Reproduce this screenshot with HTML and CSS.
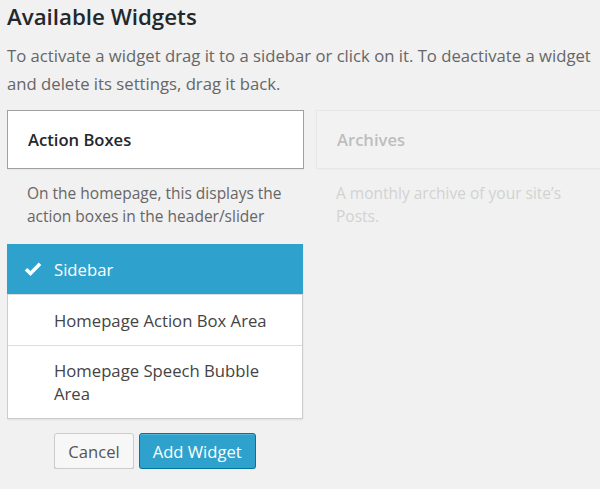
FILE: index.html
```html
<!DOCTYPE html>
<html>
<head>
<meta charset="utf-8">
<link rel="stylesheet" href="styles.css">
</head>
<body>
<div class="page">
  <h2 class="title">Available Widgets</h2>
  <p class="intro">To activate a widget drag it to a sidebar or click on it. To deactivate a widget and delete its settings, drag it back.</p>
  <div class="widgets">
    <div class="widget active">
      <div class="widget-top"><span class="widget-name">Action Boxes</span></div>
      <div class="widget-desc">On the homepage, this displays the action boxes in the header/slider</div>
      <ul class="chooser">
        <li class="option selected">
          <svg class="check" viewBox="0 0 20 20" width="18" height="18"><path d="M2.2 10.2 L7.2 15 L17.8 4.2" fill="none" stroke="#fff" stroke-width="4" stroke-linecap="butt" stroke-linejoin="miter"/></svg>
          <span>Sidebar</span>
        </li>
        <li class="option"><span>Homepage Action Box Area</span></li>
        <li class="option"><span>Homepage Speech Bubble Area</span></li>
      </ul>
      <div class="actions">
        <button class="btn cancel">Cancel</button>
        <button class="btn primary">Add Widget</button>
      </div>
    </div>
    <div class="widget faded">
      <div class="widget-top"><span class="widget-name">Archives</span></div>
      <div class="widget-desc">A monthly archive of your site’s Posts.</div>
    </div>
  </div>
</div>
</body>
</html>
```
FILE: styles.css
```css
html, body {
  margin: 0;
  padding: 0;
  background: #f1f1f1;
  overflow: hidden;
}
.page {
  font-family: "Open Sans", sans-serif;
  padding: 0 0 0 7px;
  width: 593px;
}
.title {
  margin: 0;
  padding-top: 1px;
  font-size: 22.3px;
  font-weight: 600;
  line-height: 32px;
  color: #23282d;
}
.intro {
  margin: 9px 0 0;
  font-size: 16.7px;
  line-height: 28px;
  color: #666;
  width: 593px;
}
.widgets {
  display: flex;
  gap: 12px;
  margin-top: 12px;
  align-items: flex-start;
  overflow: hidden;
  width: 593px;
}
.widget {
  width: 297px;
  flex: none;
}
.widget.faded {
  opacity: 0.25;
}
.widget-top {
  height: 57px;
  border: 1px solid #a0a0a0;
  background: #fff;
  display: flex;
  align-items: center;
  padding-left: 20px;
  box-shadow: 0 1px 1px rgba(0,0,0,0.04);
}
.faded .widget-top {
  border-color: #ccc;
  background: #f5f5f5;
}
.widget-name {
  font-size: 16.6px;
  font-weight: 600;
  color: #23282d;
}
.widget-desc {
  padding: 13px 20px 0 20px;
  font-size: 15.5px;
  line-height: 23px;
  color: #666;
}
.faded .widget-desc {
  color: #777;
}
.chooser {
  list-style: none;
  margin: 16px 0 0;
  padding: 0;
  border: 1px solid #ccc;
  background: #fff;
  width: 294px;
  box-shadow: 0 1px 2px rgba(0,0,0,0.08);
}
.option {
  display: flex;
  align-items: center;
  padding: 13px 20px 13px 46px;
  min-height: 24px;
  font-size: 16.7px;
  line-height: 23px;
  color: #444;
  border-top: 1px solid #ddd;
  position: relative;
}
.option:first-child {
  border-top: none;
}
.option.selected {
  background: #2ea2cc;
  color: #fff;
  margin: -1px -1px 0;
  padding-left: 47px;
  padding-top: 13px;
}
.check {
  position: absolute;
  left: 17px;
  top: 16px;
}
.actions {
  display: flex;
  justify-content: center;
  gap: 5px;
  margin-top: 14px;
  width: 296px;
}
.btn {
  font-family: "Open Sans", sans-serif;
  font-size: 16.6px;
  height: 36px;
  padding: 0 13px;
  border-radius: 3px;
  cursor: pointer;
}
.cancel {
  background: #f7f7f7;
  border: 1px solid #ccc;
  color: #555;
  box-shadow: 0 1px 0 #ccc;
}
.primary {
  background: #2ea2cc;
  border: 1px solid #0074a2;
  color: #fff;
  box-shadow: inset 0 1px 0 rgba(120,200,230,0.5), 0 1px 0 rgba(0,0,0,0.15);
}
```
